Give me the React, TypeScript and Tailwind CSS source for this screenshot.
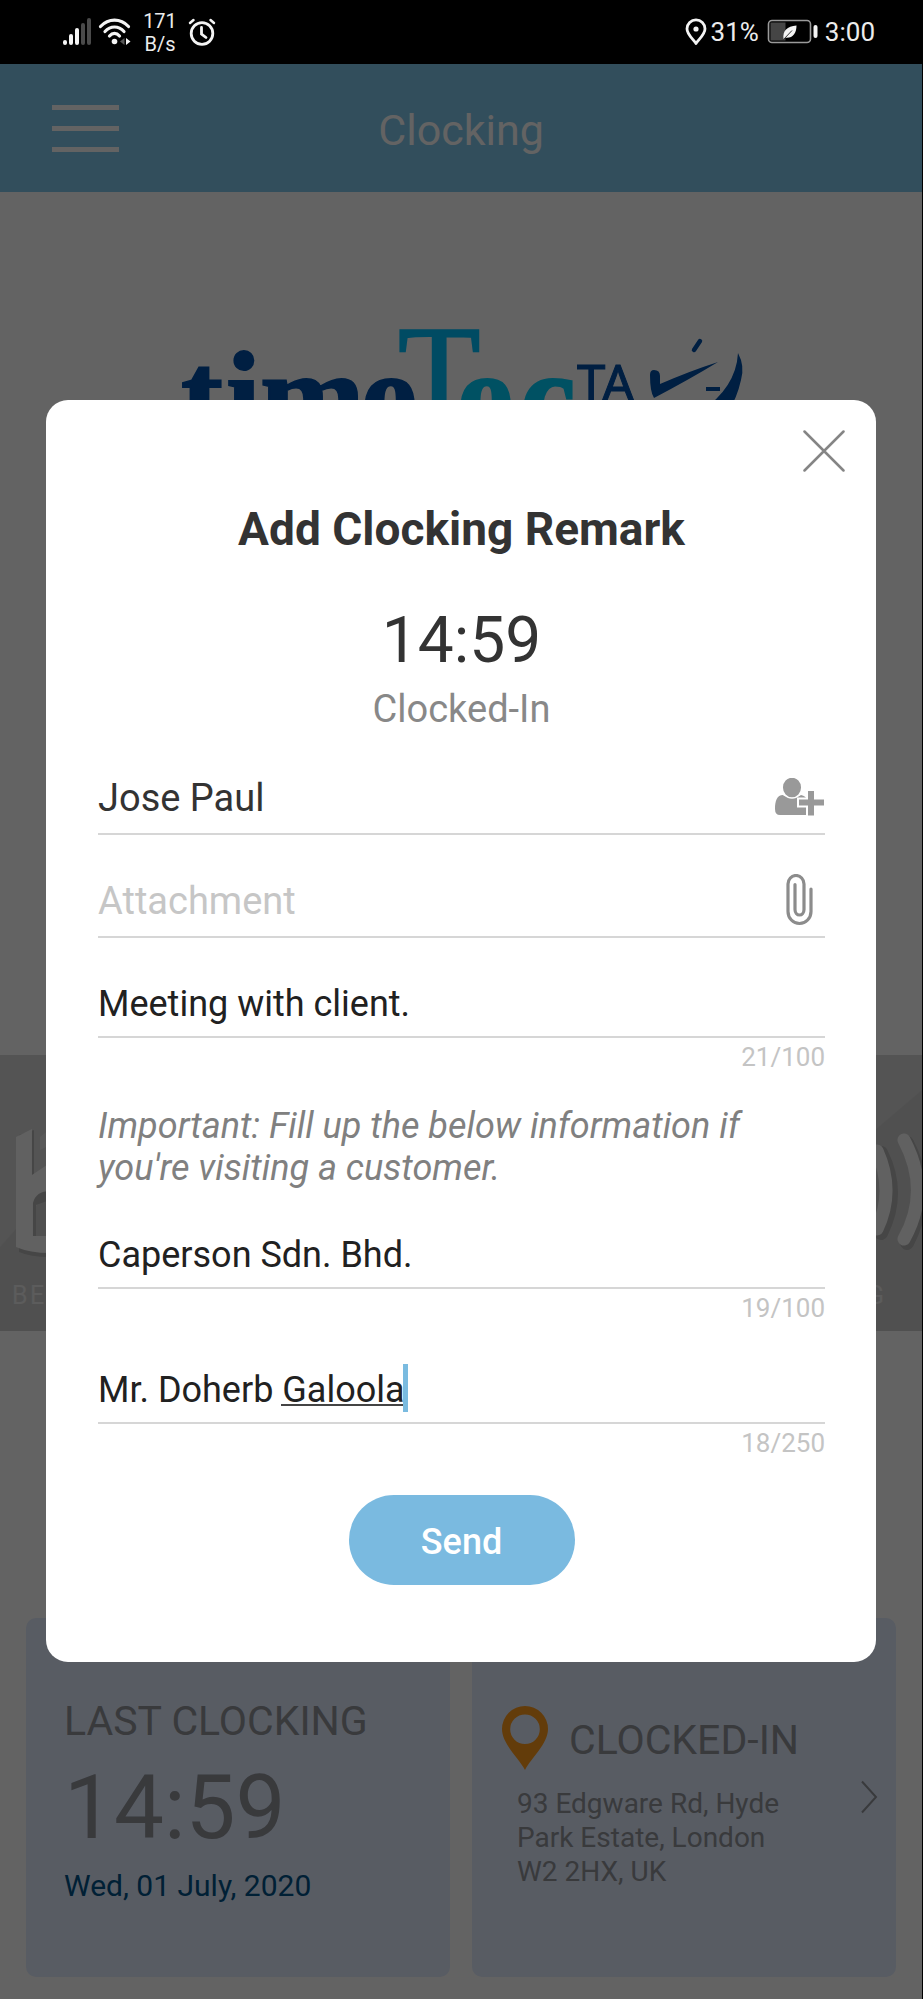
import React, { useState } from "react";

function StatusBar() {
  return (
    <div className="flex h-16 items-center justify-between bg-black pr-[48px] pl-[62px] text-[#ececec]">
      <div className="flex items-center">
        <svg width="30" height="28" viewBox="0 0 30 28" aria-hidden="true">
          <rect x="1" y="22" width="4" height="5" rx="2" fill="#f4f4f4" />
          <rect x="7" y="16" width="4" height="11" rx="2" fill="#f4f4f4" />
          <rect x="13" y="10" width="4" height="17" rx="2" fill="#f4f4f4" />
          <rect x="19" y="5" width="4" height="22" rx="2" fill="#4a4a4a" />
          <rect x="25" y="0" width="4" height="27" rx="2" fill="#4a4a4a" />
        </svg>
        <svg className="ml-1.5" width="34" height="28" viewBox="0 0 34 28" fill="none" stroke="#f4f4f4" strokeWidth="3.2" strokeLinecap="round" aria-hidden="true">
          <path d="M2.5 8.5C10.500 0 22.500 0 30.500 8.500" />
          <path d="M7 13.500C12.500 7.500 20.500 7.500 26 13.500" />
          <path d="M11.500 18C14.500 14.500 18.500 14.500 21.500 18" />
          <circle cx="16.500" cy="23.500" r="2.800" fill="#f4f4f4" stroke="none" />
          <path d="M26.500 20v7l-4.500-3.500z" fill="#555" stroke="none" />
          <path d="M28 20v7l4.500-3.500z" fill="#f4f4f4" stroke="none" />
        </svg>
        <div className="ml-2.5 flex w-9 flex-col items-center pt-0.5 text-[20px] leading-[23px]">
          <span>171</span>
          <span>B/s</span>
        </div>
        <svg className="ml-2.5" width="28" height="28" viewBox="0 0 28 28" fill="none" stroke="#f4f4f4" strokeWidth="2.800" strokeLinecap="round" aria-hidden="true">
          <circle cx="14" cy="15.500" r="10.800" />
          <path d="M13.500 9.500v6.500l4.500 3.500" />
          <path d="M2 5L5.500 2M22.500 2L26 5" strokeWidth="2.500" />
        </svg>
      </div>
      <div className="flex items-center">
        <svg width="22" height="28" viewBox="0 0 22 28" fill="none" aria-hidden="true">
          <path d="M11 25.500C8 21 2 16.500 2 10.800A9 9 0 0 1 20 10.800C20 16.500 14 21 11 25.500z" stroke="#f4f4f4" strokeWidth="2.800" strokeLinejoin="round" />
          <circle cx="11" cy="11" r="2.600" fill="#f4f4f4" />
        </svg>
        <span className="ml-1 text-[26px] leading-8">31%</span>
        <svg className="ml-2" width="52" height="26" viewBox="0 0 52 26" fill="none" aria-hidden="true">
          <rect x="1.500" y="1.500" width="42" height="22" rx="3.500" stroke="#9a9a9a" strokeWidth="1.600" />
          <rect x="3.500" y="3.500" width="15" height="18" fill="#454545" />
          <path d="M16.500 20C15.500 12 20 7 29.500 6.500C29.500 14 26 19.500 18.500 18.800z" fill="#f4f4f4" />
          <path d="M16.500 20.500L25 11.500" stroke="#333" strokeWidth="1" />
          <rect x="46.500" y="6" width="4" height="13" rx="2" fill="#f4f4f4" />
        </svg>
        <span className="ml-1.5 text-[26px] leading-8">3:00</span>
      </div>
    </div>
  );
}

function Logo() {
  return (
    <svg className="mx-auto mt-32 block h-[120px] w-[562px] max-w-full overflow-visible" viewBox="180 320 562 120" role="img" aria-label="timeTec TA">
      <g fontFamily="'Liberation Serif', serif" fontWeight="700" fontSize="126" strokeWidth="2">
        <text x="181 226 260 361" y="439" fill="#0050aa" stroke="#0050aa">time</text>
        <text x="457 520" y="439" fill="#00d0ff" stroke="#00d0ff">ec</text>
      </g>
      <text x="398" y="419" fontFamily="'Liberation Serif', serif" fontSize="135" fill="#00c0ff" stroke="#00c0ff" strokeWidth="2">T</text>
      <text x="577" y="402" fontFamily="'Noto Sans', sans-serif" fontSize="51" fill="#0050aa" stroke="#0050aa" strokeWidth="1">TA</text>
      <g fill="#0050aa">
        <path d="M650 375Q650 370 654 370Q660 370 660 376V384Q690 371 718 362Q690 379 654 398Q650 392 650 375z" />
        <path d="M738 353Q745 366 741 380Q737 398 728 412H700Q736 388 738 353z" />
        <path d="M700 341L694 350" stroke="#0050aa" strokeWidth="4.500" strokeLinecap="round" />
        <rect x="706" y="387" width="14" height="4" />
      </g>
    </svg>
  );
}

function Banner() {
  return (
    <svg className="mt-[615px] block h-[276px] w-full" viewBox="0 0 923 276" preserveAspectRatio="none" aria-hidden="true">
      <rect width="923" height="276" fill="#cfcfcf" />
      <path d="M0 0H923V35L876 75L46 140L0 192z" fill="#d8d8d8" />
      <path d="M19 80L34 75V122L50 112V145L36 150V183H50V202Q30 202 19 197z" fill="#b4b4b4" />
      <path d="M16 82L32 74V120L50 108V136Q36 136 33 148V181H50V198Q30 198 16 192z" fill="#fafafa" />
      <path d="M40 82L50 74V90L40 95z" fill="#e6e6e6" />
      <g fill="none" strokeLinecap="round">
        <path d="M882 98Q902 138 882 178M908 88Q934 138 908 188" stroke="#b4b4b4" strokeWidth="14" />
        <path d="M878 96Q896 136 878 174M905 85Q932 136 905 184" stroke="#fafafa" strokeWidth="13" />
      </g>
      <g fontFamily="Roboto, sans-serif" fontSize="25" fill="#ececec">
        <text x="12 30" y="249">BE</text>
        <text x="868" y="249">G</text>
      </g>
    </svg>
  );
}

function ClockingCards() {
  return (
    <div className="mt-[287px] grid grid-cols-2 gap-[22px] px-[26px] pb-[22px]">
      <section className="h-[359px] rounded-[10px] bg-[#e2ecff] pt-[78px] pl-[38px] text-[#92959c]">
        <h2 className="text-[41px] leading-[50px]">LAST CLOCKING</h2>
        <p className="mt-2 text-[89px] leading-[108px]">14:59</p>
        <p className="mt-1 text-[30px] leading-10 text-[#005288]">Wed, 01 July, 2020</p>
      </section>
      <section className="flex h-[359px] items-start rounded-[10px] bg-[#e2ecff] pr-[18px] pl-[29px] text-[#92959c]">
        <div className="flex-1 pt-[86px]">
          <div className="flex items-center gap-5">
            <svg width="48" height="68" viewBox="0 0 48 68" aria-hidden="true">
              <path fillRule="evenodd" fill="#ff9a1a" d="M24 66C18 54 1 40 1 25A23 23 0 0 1 47 25C47 40 30 54 24 66zM24 10.500a14.800 14.800 0 1 0 0 29.600a14.800 14.800 0 0 0 0-29.600z" />
            </svg>
            <h2 className="pt-1 text-[41px] leading-[50px]">CLOCKED-IN</h2>
          </div>
          <p className="mt-[15px] w-[300px] pl-4 text-[28px] leading-[34px]">93 Edgware Rd, Hyde Park Estate, London W2 2HX, UK</p>
        </div>
        <svg className="mt-[162px] shrink-0" width="18" height="34" viewBox="0 0 18 34" fill="none" stroke="#92959c" strokeWidth="2" aria-hidden="true">
          <path d="M2 1.500L16 17L2 32.500" />
        </svg>
      </section>
    </div>
  );
}

type FieldProps = {
  id: string;
  label: string;
  value: string;
  count: number;
  onChange: (value: string) => void;
  limit: number;
  children?: React.ReactNode;
};

function RemarkField({ id, label, value, count, onChange, limit, children }: FieldProps) {
  return (
    <div className="mt-8">
      <label htmlFor={id} className="sr-only">{label}</label>
      <div className="relative border-b-2 border-[#d6d6d6]">
        <input
          id={id}
          value={value}
          maxLength={limit}
          spellCheck={false}
          onChange={(e) => onChange(e.target.value)}
          className="block h-[66px] w-full bg-transparent pt-0.5 text-[36px] text-[#212121] outline-none"
        />
        {children}
      </div>
      <p className="mt-[3px] text-right text-[26px] leading-8 text-[#c4c4c4]">{`${count}/${limit}`}</p>
    </div>
  );
}

function RemarkDialog() {
  const [person, setPerson] = useState("Jose Paul");
  const [remark, setRemark] = useState("Meeting with client.");
  const [company, setCompany] = useState("Caperson Sdn. Bhd.");
  const [contact, setContact] = useState("Mr. Doherb Galoola");
  return (
    <div role="dialog" aria-modal="true" aria-labelledby="dialog-title" className="w-full rounded-[22px] bg-white pr-[51px] pb-[77px] pl-[52px]">
      <div className="-mr-5 flex justify-end pt-[30px]">
        <button type="button" aria-label="Close">
          <svg width="42" height="42" viewBox="0 0 42 42" fill="none" stroke="#858585" strokeWidth="2.500" strokeLinecap="round">
            <path d="M1.500 1.500L40.500 40.500M40.500 1.500L1.500 40.500" />
          </svg>
        </button>
      </div>
      <h2 id="dialog-title" className="mt-[29px] text-center text-[46px] leading-[56px] font-bold text-[#333]">Add Clocking Remark</h2>
      <p className="mt-12 text-center text-[64px] leading-[72px] text-[#333]">14:59</p>
      <p className="mt-2 text-center text-[38px] leading-[48px] text-[#888]">Clocked-In</p>

      <div className="mt-7 flex items-center border-b-2 border-[#d6d6d6]">
        <label htmlFor="person" className="sr-only">Person</label>
        <input id="person" value={person} onChange={(e) => setPerson(e.target.value)} className="h-[72px] min-w-0 flex-1 bg-transparent pt-0.5 text-[38px] text-[#333] outline-none" />
        <button type="button" aria-label="Add person">
          <svg width="50" height="38" viewBox="0 0 50 38" fill="#999">
            <path d="M8 17C10 20 23 20 26 17Q31 18 32 22V37H5Q0 37 0 31C0 23 2 17 8 17z" />
            <ellipse cx="17" cy="9.500" rx="9.800" ry="10.500" stroke="#fff" strokeWidth="1.500" />
            <path d="M33 13h6v8.500h10v6h-10v10h-6v-10h-9v-6h9z" stroke="#fff" strokeWidth="4" />
            <path d="M33 13h6v8.500h10v6h-10v10h-6v-10h-9v-6h9z" />
          </svg>
        </button>
      </div>

      <div className="mt-[29px] flex items-center border-b-2 border-[#d6d6d6]">
        <label htmlFor="attachment" className="sr-only">Attachment</label>
        <input id="attachment" placeholder="Attachment" className="h-[72px] min-w-0 flex-1 bg-transparent pt-0.5 text-[38px] text-[#333] outline-none placeholder:text-[#c6c6c6] placeholder:opacity-100" />
        <button type="button" aria-label="Attach file" className="mr-3">
          <svg width="27" height="52" viewBox="0 0 27 52" fill="none" stroke="#8c8c8c" strokeWidth="3.200" strokeLinecap="round">
            <path d="M25 15V37.500A11.500 12 0 0 1 2 37.500V10A8 8.500 0 0 1 18 10V35.500A4.500 5.500 0 0 1 9 35.500V10.500" />
          </svg>
        </button>
      </div>

      <RemarkField id="remark" label="Remark" value={remark} count={remark.length + 1} onChange={setRemark} limit={100} />
      <p className="mt-8 text-[36px] leading-[42px] text-[#808080] italic">Important: Fill up the below information if you're visiting a customer.</p>
      <RemarkField id="company" label="Customer company" value={company} count={company.length + 1} onChange={setCompany} limit={100} />
      <RemarkField id="contact" label="Customer contact" value={contact} count={contact.length} onChange={setContact} limit={250}>
        <span aria-hidden="true" className="absolute bottom-4 left-[183px] h-0.5 w-[122px] bg-[#444]" />
        <span aria-hidden="true" className="absolute bottom-2.5 left-[305px] h-12 w-[5px] bg-[#7abbe0]" />
      </RemarkField>

      <div className="mt-9 flex justify-center">
        <button type="button" className="h-[90px] w-[226px] rounded-full bg-[#7abae0] pt-1 text-[36px] font-medium text-white">Send</button>
      </div>
    </div>
  );
}

export default function App() {
  return (
    <div className="min-h-screen font-['Roboto',sans-serif]">
      <StatusBar />
      <div className="relative border-r border-black bg-white">
        <header className="grid h-32 grid-cols-[1fr_auto_1fr] items-center bg-[#80c8ec] px-[52px]">
          <button type="button" aria-label="Menu" className="flex w-[67px] flex-col gap-4">
            <span className="h-[5px] bg-white" />
            <span className="h-[5px] bg-white" />
            <span className="h-[5px] bg-white" />
          </button>
          <h1 className="pt-1 text-[43px] leading-[52px] text-white">Clocking</h1>
        </header>
        <main>
          <Logo />
          <Banner />
          <ClockingCards />
        </main>
        <div className="absolute inset-0 flex items-start bg-black/61 px-[46px] pt-[336px]">
          <RemarkDialog />
        </div>
      </div>
    </div>
  );
}
